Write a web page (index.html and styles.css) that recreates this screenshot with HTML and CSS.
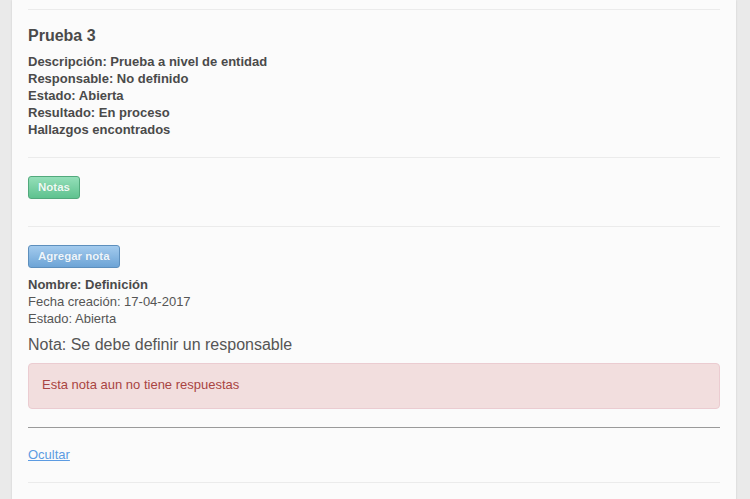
FILE: index.html
```html
<!DOCTYPE html>
<html lang="es">
<head>
<meta charset="utf-8">
<title>Prueba 3</title>
<link rel="stylesheet" href="styles.css">
</head>
<body>
<div class="panel">
  <hr class="sep">
  <section class="test">
    <h3 class="test-title">Prueba 3</h3>
    <div class="test-info">
      <div>Descripción: Prueba a nivel de entidad</div>
      <div>Responsable: No definido</div>
      <div>Estado: Abierta</div>
      <div>Resultado: En proceso</div>
      <div>Hallazgos encontrados</div>
    </div>
  </section>
  <hr class="sep">
  <section class="notes-toggle">
    <button class="btn btn-green">Notas</button>
  </section>
  <hr class="sep">
  <section class="notes">
    <button class="btn btn-blue">Agregar nota</button>
    <div class="note-info">
      <div class="strong">Nombre: Definición</div>
      <div>Fecha creación: 17-04-2017</div>
      <div>Estado: Abierta</div>
    </div>
    <div class="note-text">Nota: Se debe definir un responsable</div>
    <div class="alert">Esta nota aun no tiene respuestas</div>
  </section>
  <hr class="dark">
  <div class="hide-row"><a href="#" class="link">Ocultar</a></div>
  <hr class="sep">
</div>
</body>
</html>
```
FILE: styles.css
```css
html, body {
  margin: 0;
  padding: 0;
}
body {
  background: #eaeaea;
  font-family: "Liberation Sans", Arial, sans-serif;
  color: #555;
  font-size: 13px;
  line-height: 17px;
  height: 499px;
  overflow: hidden;
}
.panel {
  margin-left: 12px;
  width: 724px;
  box-sizing: border-box;
  padding: 9px 16px 20px;
  background: #fbfbfb;
  box-shadow: 0 0 2px rgba(0,0,0,0.12);
  min-height: 499px;
}
hr {
  margin: 0;
  border: 0;
  height: 0;
}
.sep {
  border-top: 1px solid #ebebeb;
}
.dark {
  border-top: 1px solid #9a9a9a;
}
.test {
  padding: 17px 0 19px;
}
.test-title {
  margin: 0;
  font-size: 16px;
  line-height: 18px;
  font-weight: bold;
  color: #4a4a4a;
}
.test-info {
  margin-top: 8px;
  font-weight: bold;
  color: #4a4a4a;
}
.notes-toggle {
  padding: 18px 0 27px;
}
.btn {
  display: inline-block;
  height: 23px;
  box-sizing: border-box;
  padding: 0 9px;
  font-family: "Liberation Sans", Arial, sans-serif;
  font-size: 11.5px;
  font-weight: bold;
  line-height: 21px;
  color: #fff;
  border-radius: 3px;
  text-shadow: 0 0 1px rgba(0,0,0,0.15);
  cursor: pointer;
  vertical-align: top;
}
.btn-green {
  background: linear-gradient(#94dfb9, #5fc28f);
  border: 1px solid #52a97c;
  color: #eefbf4;
}
.btn-blue {
  background: linear-gradient(#a3cbee, #6da4d6);
  border: 1px solid #5d8fbd;
  color: #eef6fd;
}
.notes {
  padding: 18px 0 18px;
}
.note-info {
  margin-top: 8px;
}
.note-info .strong {
  font-weight: bold;
  color: #4a4a4a;
}
.note-text {
  margin-top: 8px;
  font-size: 16px;
  line-height: 20px;
  color: #555;
}
.alert {
  margin-top: 8px;
  padding: 12px 13px 15px;
  background: #f2dede;
  border: 1px solid #ebccd1;
  border-radius: 4px;
  color: #a94442;
}
.hide-row {
  padding: 18px 0 19px;
}
.link {
  color: #5c9be2;
  text-decoration: underline;
}
```
